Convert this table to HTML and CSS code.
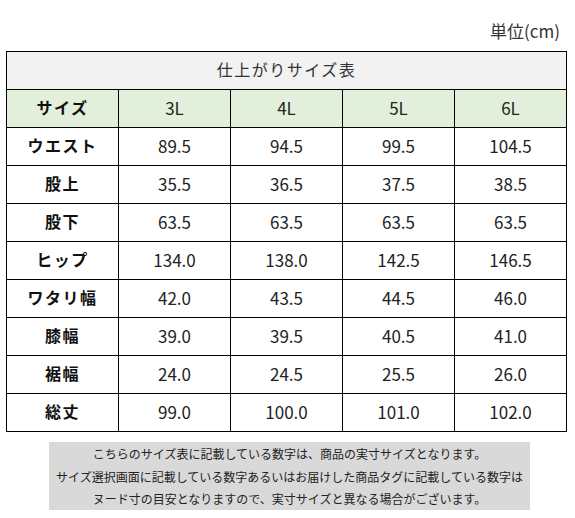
FILE: index.html
```html
<!DOCTYPE html>
<html lang="ja">
<head>
<meta charset="utf-8">
<link rel="stylesheet" href="styles.css">
</head>
<body>
<div class="page">
  <div class="unit">単位(cm)</div>
  <table class="size-table">
    <colgroup>
      <col class="c"><col class="c"><col class="c"><col class="c"><col class="c">
    </colgroup>
    <thead>
      <tr class="title-row"><th colspan="5">仕上がりサイズ表</th></tr>
      <tr class="head-row"><th class="label">サイズ</th><th>3L</th><th>4L</th><th>5L</th><th>6L</th></tr>
    </thead>
    <tbody>
      <tr><th class="label">ウエスト</th><td>89.5</td><td>94.5</td><td>99.5</td><td>104.5</td></tr>
      <tr><th class="label">股上</th><td>35.5</td><td>36.5</td><td>37.5</td><td>38.5</td></tr>
      <tr><th class="label">股下</th><td>63.5</td><td>63.5</td><td>63.5</td><td>63.5</td></tr>
      <tr><th class="label">ヒップ</th><td>134.0</td><td>138.0</td><td>142.5</td><td>146.5</td></tr>
      <tr><th class="label">ワタリ幅</th><td>42.0</td><td>43.5</td><td>44.5</td><td>46.0</td></tr>
      <tr><th class="label">膝幅</th><td>39.0</td><td>39.5</td><td>40.5</td><td>41.0</td></tr>
      <tr><th class="label">裾幅</th><td>24.0</td><td>24.5</td><td>25.5</td><td>26.0</td></tr>
      <tr><th class="label">総丈</th><td>99.0</td><td>100.0</td><td>101.0</td><td>102.0</td></tr>
    </tbody>
  </table>
  <div class="note">
    <p>こちらのサイズ表に記載している数字は、商品の実寸サイズとなります。</p>
    <p>サイズ選択画面に記載している数字あるいはお届けした商品タグに記載している数字は</p>
    <p>ヌード寸の目安となりますので、実寸サイズと異なる場合がございます。</p>
  </div>
</div>
</body>
</html>
```

FILE: styles.css
```css
html, body {
  margin: 0;
  padding: 0;
  background: #fff;
}
body {
  font-family: "Noto Sans CJK JP", "Noto Sans", sans-serif;
  color: #222;
}
.page {
  width: 575px;
}
.unit {
  height: 51px;
  box-sizing: border-box;
  padding-top: 20px;
  padding-right: 15px;
  text-align: right;
  font-size: 17px;
  line-height: 22px;
  color: #333;
}
.size-table {
  margin-left: 6px;
  width: 561px;
  border-collapse: collapse;
  table-layout: fixed;
}
.size-table col.c {
  width: 112px;
}
.size-table th,
.size-table td {
  border: 1px solid #000;
  height: 34px;
  padding: 0 0 3px 0;
  text-align: center;
  vertical-align: middle;
  font-size: 17px;
  font-weight: 400;
  color: #222;
}
.title-row th {
  background: #f2f2f2;
  font-size: 16px;
  letter-spacing: 1.5px;
  color: #333;
}
.head-row th {
  background: #e2efda;
}
.size-table th.label {
  font-weight: 700;
  font-size: 16px;
  letter-spacing: 1.5px;
  color: #111;
}
.note {
  margin: 10px 0 0 49px;
  width: 481px;
  height: 68px;
  box-sizing: border-box;
  padding-top: 1px;
  background: #d9d9d9;
  text-align: center;
  font-size: 12px;
  color: #222;
}
.note p {
  margin: 0;
  line-height: 22.5px;
}
```
